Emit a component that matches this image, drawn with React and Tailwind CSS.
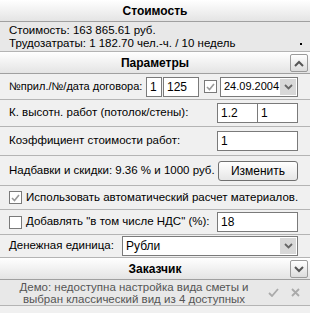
import React from 'react';

const font = { fontFamily: '"Liberation Sans", Arial, sans-serif' };

function Header({ title, chevron }) {
  return (
    <div className="relative flex h-[22px] items-center justify-center border-b border-[#a0a0a0] bg-gradient-to-b from-white to-[#e4e4e4]">
      <span className="text-[12px] font-bold text-black">{title}</span>
      {chevron && (
        <div className="absolute right-[2px] top-[2px] flex h-[18px] w-[18px] items-center justify-center rounded-[2px] border border-[#9a9a9a] bg-gradient-to-b from-white to-[#dcdcdc]">
          <svg width="10" height="7" viewBox="0 0 10 7">
            <path d={chevron === 'up' ? 'M1 6 L5 2 L9 6' : 'M1 1 L5 5 L9 1'} fill="none" stroke="#555" strokeWidth="2" />
          </svg>
        </div>
      )}
    </div>
  );
}

function Field({ className, children }) {
  return (
    <div className={`flex h-[20px] shrink-0 items-center border border-[#7a7a7a] bg-white px-[3px] text-[12px] ${className}`}>
      {children}
    </div>
  );
}

function Arrow() {
  return (
    <div className="flex h-[16px] w-[16px] shrink-0 items-center justify-center bg-[#d8d8d8]">
      <svg width="9" height="6" viewBox="0 0 9 6">
        <path d="M1 1 L4.5 4.5 L8 1" fill="none" stroke="#666" strokeWidth="1.8" />
      </svg>
    </div>
  );
}

function Check({ checked }) {
  return (
    <div className="flex h-[13px] w-[13px] shrink-0 items-center justify-center border border-[#7a7a7a] bg-white">
      {checked && (
        <svg width="9" height="8" viewBox="0 0 9 8">
          <path d="M1 4 L3.5 6.5 L8 1" fill="none" stroke="#999" strokeWidth="1.6" />
        </svg>
      )}
    </div>
  );
}

function Row({ h, children }) {
  return (
    <div className={`flex ${h} items-center whitespace-nowrap border-b border-[#b4b4b4] pl-[9px] pr-[12px] text-[11.5px] text-black`}>{children}</div>
  );
}

export default function App() {
  return (
    <div className="h-[313px] w-[310px] overflow-hidden bg-[#f0f0f0]" style={font}>
      <Header title="Стоимость" />
      <div className="h-[30px] whitespace-nowrap border-b border-[#b4b4b4] bg-[#e8e8e8] pl-[9px] pr-[8px] pt-[2px] text-[11.5px] leading-[13px] text-black">
        <div>Стоимость: 163 865.61 руб.</div>
        <div className="flex items-center justify-between">
          <span>Трудозатраты: 1 182.70 чел.-ч. / 10 недель</span>
          <span className="h-[2px] w-[2px] bg-black" />
        </div>
      </div>
      <Header title="Параметры" chevron="up" />
      <Row h="h-[26px]">
        <span className="min-w-0 flex-1 text-[11px]">№прил./№/дата договора:</span>
        <Field className="w-[16px]">1</Field>
        <Field className="ml-px w-[36px]">125</Field>
        <div className="ml-[5px]"><Check checked /></div>
        <Field className="ml-[3px] w-[78px] !pr-px justify-between">
          <span className="text-[11px]">24.09.2004</span>
          <Arrow />
        </Field>
      </Row>
      <Row h="h-[27px]">
        <span className="flex-1">К. высотн. работ (потолок/стены):</span>
        <Field className="w-[41px]">1.2</Field>
        <Field className="w-[40px] border-l-0">1</Field>
      </Row>
      <Row h="h-[29px]">
        <span className="flex-1">Коэффициент стоимости работ:</span>
        <Field className="w-[81px]">1</Field>
      </Row>
      <Row h="h-[30px]">
        <span className="flex-1">Надбавки и скидки: 9.36 % и 1000 руб.</span>
        <button className="h-[20px] w-[80px] shrink-0 rounded-[3px] border border-[#707070] bg-gradient-to-b from-white to-[#e6e6e6] text-[12px]">Изменить</button>
      </Row>
      <Row h="h-[24px]">
        <Check checked />
        <span className="ml-[4px]">Использовать автоматический расчет материалов.</span>
      </Row>
      <Row h="h-[25px]">
        <Check />
        <span className="ml-[4px] flex-1">Добавлять "в том числе НДС" (%):</span>
        <Field className="w-[81px]">18</Field>
      </Row>
      <Row h="h-[23px]">
        <span className="w-[113px]">Денежная единица:</span>
        <Field className="flex-1 shrink justify-between !pr-px">
          <span>Рубли</span>
          <Arrow />
        </Field>
      </Row>
      <Header title="Заказчик" chevron="down" />
      <div className="flex h-[26px] items-center border-b border-[#b4b4b4] bg-[#e8e8e8]">
        <div className="flex-1 pl-[10px] text-center text-[11.5px] leading-[12px] text-[#555] whitespace-nowrap">
          Демо: недоступна настройка вида сметы и<br />выбран классический вид из 4 доступных
        </div>
        <div className="flex w-[52px] items-center justify-center gap-[12px]">
          <svg width="11" height="9" viewBox="0 0 11 9"><path d="M1 5 L4 8 L10 1" fill="none" stroke="#aaa" strokeWidth="1.8" /></svg>
          <svg width="9" height="9" viewBox="0 0 9 9"><path d="M1 1 L8 8 M8 1 L1 8" fill="none" stroke="#aaa" strokeWidth="1.8" /></svg>
        </div>
      </div>
    </div>
  );
}
